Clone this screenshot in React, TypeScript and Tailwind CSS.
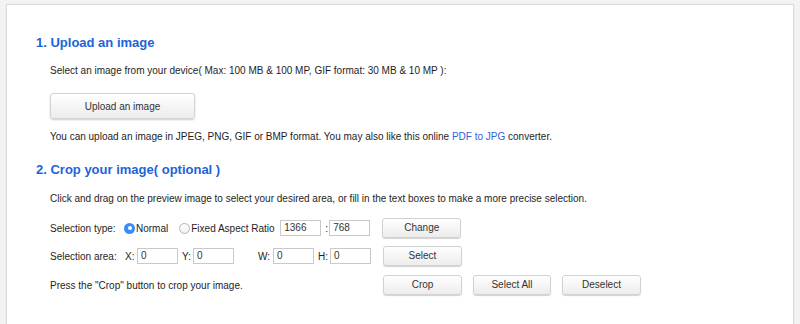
import React from "react";

const font = { fontFamily: '"Liberation Sans", Arial, Helvetica, sans-serif' };

function Btn({ children, w }: { children: React.ReactNode; w: string }) {
  return (
    <button
      className={`${w} h-[20px] whitespace-nowrap rounded-[3px] border border-[#d2d2d2] bg-gradient-to-b from-white to-[#ececec] text-[10px] leading-[18px] text-[#333] shadow-[0_1px_1px_rgba(0,0,0,0.18)]`}
    >
      {children}
    </button>
  );
}

function Field({ value, w = "w-[41px]" }: { value: string; w?: string }) {
  return (
    <div
      className={`${w} h-[16px] shrink-0 border border-[#c9c9c9] bg-white pl-[3px] text-[10px] leading-[14px] text-[#333]`}
    >
      {value}
    </div>
  );
}

function Radio({ checked }: { checked?: boolean }) {
  return checked ? (
    <span className="flex h-[11px] w-[11px] shrink-0 items-center justify-center rounded-full bg-[#3a8cf5]">
      <span className="block h-[4px] w-[4px] rounded-full bg-white" />
    </span>
  ) : (
    <span className="block h-[11px] w-[11px] shrink-0 rounded-full border border-[#b5b5b5] bg-gradient-to-b from-white to-[#f0f0f0]" />
  );
}

export default function App() {
  return (
    <div className="min-h-[324px] w-[800px] overflow-hidden whitespace-nowrap bg-[#f3f3f3] pl-[6px] pr-[6px] pt-[4px]" style={font}>
      <div className="h-[330px] border border-[#dcdcdc] bg-white pl-[29px] pt-[28px] shadow-[0_0_2px_rgba(0,0,0,0.06)]">
        <h2 className="h-[20px] text-[13px] font-bold leading-[20px] text-[#1c63db]">1. Upload an image</h2>
        <div className="pl-[14px] text-[10px] text-[#1e1e1e]">
          <p className="mt-[10px] leading-[16px]">
            Select an image from your device( Max: 100 MB &amp; 100 MP, GIF format: 30 MB &amp; 10 MP ):
          </p>
          <div className="mt-[14px] flex">
            <button className="h-[26px] w-[145px] rounded-[3px] border border-[#d4d4d4] bg-gradient-to-b from-white to-[#ececec] text-[10px] text-[#333] shadow-[0_1px_2px_rgba(0,0,0,0.2)]">
              Upload an image
            </button>
          </div>
          <p className="mt-[10px] leading-[16px]">
            You can upload an image in JPEG, PNG, GIF or BMP format. You may also like this online{" "}
            <span className="text-[#2f62d8]">PDF to JPG</span> converter.
          </p>
        </div>
        <h2 className="mt-[15px] h-[20px] text-[13px] font-bold leading-[20px] text-[#1c63db]">
          2. Crop your image( optional )
        </h2>
        <div className="pl-[14px] text-[10px] text-[#1e1e1e]">
          <p className="mt-[11px] leading-[16px]">
            Click and drag on the preview image to select your desired area, or fill in the text boxes to make a more precise selection.
          </p>

          <div className="mt-[11px] flex h-[20px] items-center">
            <span className="w-[74px] shrink-0">Selection type:</span>
            <Radio checked />
            <span className="ml-[1px]">Normal</span>
            <span className="ml-[11px] flex">
              <Radio />
            </span>
            <span className="ml-[1px] w-[89px] shrink-0">Fixed Aspect Ratio</span>
            <Field value="1366" />
            <span className="w-[8px] shrink-0 pl-[4px]">:</span>
            <Field value="768" />
            <span className="ml-[12px] flex">
              <Btn w="w-[79px]">Change</Btn>
            </span>
          </div>

          <div className="mt-[8px] flex h-[20px] items-center">
            <span className="w-[75px] shrink-0">Selection area:</span>
            <span className="w-[12px] shrink-0">X:</span>
            <Field value="0" />
            <span className="ml-[4px] w-[11px] shrink-0">Y:</span>
            <Field value="0" />
            <span className="ml-[24px] w-[15px] shrink-0">W:</span>
            <Field value="0" />
            <span className="ml-[4px] w-[12px] shrink-0">H:</span>
            <Field value="0" />
            <span className="ml-[12px] flex">
              <Btn w="w-[79px]">Select</Btn>
            </span>
          </div>

          <div className="mt-[9px] flex h-[20px] items-center">
            <span className="w-[333px] shrink-0">Press the "Crop" button to crop your image.</span>
            <Btn w="w-[79px]">Crop</Btn>
            <span className="ml-[11px] flex">
              <Btn w="w-[78px]">Select All</Btn>
            </span>
            <span className="ml-[11px] flex">
              <Btn w="w-[79px]">Deselect</Btn>
            </span>
          </div>
        </div>
      </div>
    </div>
  );
}
